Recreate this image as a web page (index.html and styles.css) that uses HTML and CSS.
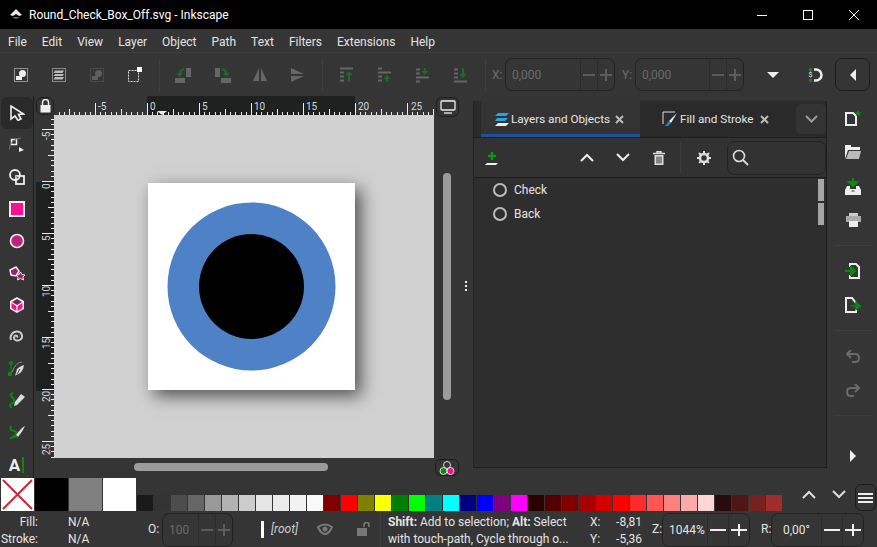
FILE: index.html
```html
<!DOCTYPE html>
<html>
<head>
    <title>Round_Check_Box_Off.svg - Inkscape</title>
    <link rel="stylesheet" href="styles.css">
</head>
<body>
<div class="app">
    <!-- title bar -->
    <div class="titlebar">
        <svg class="logo" width="14" height="12" viewBox="0 0 14 12"><path d="M7 0 L13 6 L10 7 L7 5 L4 7 L1 6 Z" fill="#e8e8e8"/><path d="M3 8 L11 8 L7 10 Z" fill="#5a6a80"/></svg>
        <span class="title-text">Round_Check_Box_Off.svg - Inkscape</span>
        <div class="winctl">
            <span class="winbtn"><svg width="12" height="12" viewBox="0 0 12 12"><path d="M1 6.5H11" stroke="#fff"/></svg></span>
            <span class="winbtn"><svg width="12" height="12" viewBox="0 0 12 12"><rect x="1.5" y="1.5" width="9" height="9" fill="none" stroke="#fff"/></svg></span>
            <span class="winbtn"><svg width="12" height="12" viewBox="0 0 12 12"><path d="M1 1L11 11M11 1L1 11" stroke="#fff"/></svg></span>
        </div>
    </div>

    <!-- menu -->
    <div class="menubar">
        <span>File</span><span>Edit</span><span>View</span><span>Layer</span><span>Object</span><span>Path</span><span>Text</span><span>Filters</span><span>Extensions</span><span>Help</span>
    </div>

    <!-- top toolbar -->
    <div class="toolbar">
        <div class="tgroup first">
            <span class="tbtn"><svg width="16" height="16" viewBox="0 0 16 16"><rect x="1.5" y="1.5" width="13" height="13" fill="none" stroke="#eee" stroke-dasharray="1 1"/><circle cx="9.5" cy="6.5" r="3.5" fill="#eee"/><rect x="3" y="9" width="6" height="4" fill="#eee"/></svg></span>
            <span class="tbtn"><svg width="16" height="16" viewBox="0 0 16 16"><rect x="1.5" y="1.5" width="13" height="13" fill="none" stroke="#ddd" stroke-dasharray="1 1"/><path d="M4 3.5h9l-1.5 2.5h-9zM4 7h9l-1.5 2h-9zM4 10h9l-1.5 2.5h-9z" fill="#bbb"/></svg></span>
            <span class="tbtn dim"><svg width="16" height="16" viewBox="0 0 16 16"><rect x="1.5" y="1.5" width="13" height="13" fill="none" stroke="#5e5e5e" stroke-dasharray="1 1"/><circle cx="9.5" cy="6.5" r="3.5" fill="#5e5e5e"/><rect x="3" y="9" width="6" height="4" fill="#5e5e5e"/></svg></span>
            <span class="tbtn"><svg width="16" height="16" viewBox="0 0 16 16"><rect x="1.5" y="3.5" width="10" height="11" fill="none" stroke="#ddd" stroke-dasharray="2 1"/><rect x="10" y="0" width="5" height="5" fill="#fff"/></svg></span>
        </div>
        <i class="vsep"></i>
        <div class="tgroup">
            <span class="tbtn"><svg width="20" height="16" viewBox="0 0 20 16"><rect x="12" y="1" width="5" height="9" fill="#666"/><rect x="1" y="11" width="10" height="5" fill="#666"/><path d="M10 2 Q6 3 5.500 7" fill="none" stroke="#1f6b24" stroke-width="2"/><path d="M2.500 6H9L5.500 10Z" fill="#1f6b24"/></svg></span>
            <span class="tbtn"><svg width="20" height="16" viewBox="0 0 20 16"><rect x="3" y="1" width="5" height="9" fill="#666"/><rect x="9" y="11" width="10" height="5" fill="#666"/><path d="M10 2 Q14 3 14.500 7" fill="none" stroke="#1f6b24" stroke-width="2"/><path d="M11 6H17.500L14.500 10Z" fill="#1f6b24"/></svg></span>
            <span class="tbtn"><svg width="16" height="16" viewBox="0 0 16 16"><path d="M7 1V14H1ZM9 1V14H15Z" fill="#666"/></svg></span>
            <span class="tbtn"><svg width="16" height="16" viewBox="0 0 16 16"><path d="M1 1L14 7H1ZM1 15L14 9H1Z" fill="#666"/></svg></span>
        </div>
        <i class="vsep"></i>
        <div class="tgroup">
            <span class="tbtn"><svg width="16" height="16" viewBox="0 0 16 16"><path d="M1 1.5H14M1 5.5H5M1 9.5H5M1 13.5H5" stroke="#666" stroke-width="2"/><path d="M10 15V7" stroke="#1f6b24" stroke-width="2"/><path d="M6.500 8L10 4L13.500 8Z" fill="#1f6b24"/></svg></span>
            <span class="tbtn"><svg width="16" height="16" viewBox="0 0 16 16"><path d="M1 1.5H5M1 5.5H14M1 9.5H5M1 13.5H5" stroke="#666" stroke-width="2"/><path d="M10 15V11" stroke="#1f6b24" stroke-width="2"/><path d="M6.500 12L10 8L13.500 12Z" fill="#1f6b24"/></svg></span>
            <span class="tbtn"><svg width="16" height="16" viewBox="0 0 16 16"><path d="M1 2.500H5M1 6.500H5M1 10.500H14M1 14.500H5" stroke="#666" stroke-width="2"/><path d="M10 1V5" stroke="#1f6b24" stroke-width="2"/><path d="M6.500 4L10 8L13.500 4Z" fill="#1f6b24"/></svg></span>
            <span class="tbtn"><svg width="16" height="16" viewBox="0 0 16 16"><path d="M1 2.500H5M1 6.500H5M1 10.500H5M1 14.500H14" stroke="#666" stroke-width="2"/><path d="M10 1V8" stroke="#1f6b24" stroke-width="2"/><path d="M6.500 7L10 11L13.500 7Z" fill="#1f6b24"/></svg></span>
        </div>
        <i class="vsep"></i>
        <span class="coord-label">X:</span>
        <div class="spin spin-x">
            <span class="spin-val off">0,000</span>
            <span class="spin-btn minus off"></span><span class="spin-btn plus off"></span>
        </div>
        <span class="coord-label y">Y:</span>
        <div class="spin spin-y">
            <span class="spin-val off">0,000</span>
            <span class="spin-btn minus off"></span><span class="spin-btn plus off"></span>
        </div>
        <svg class="drop" width="12" height="6" viewBox="0 0 12 6"><path d="M0 0H12L6 6Z" fill="#eee"/></svg>
        <svg class="snap" width="16" height="16" viewBox="0 0 16 16"><path d="M6 2.500H8A5.500 5.500 0 0 1 8 13.500H6" fill="none" stroke="#eee" stroke-width="2.500"/><rect x="1" y="1" width="3" height="3" fill="#0a8a0a"/><rect x="1" y="12" width="3" height="3" fill="#0a8a0a"/><text x="0.500" y="10" class="snap-s">$</text></svg>
        <span class="sidebtn"><svg width="6" height="12" viewBox="0 0 6 12"><path d="M6 0V12L0 6Z" fill="#eee"/></svg></span>
    </div>

    <!-- main area -->
    <div class="main">
        <div class="tools">
            <span class="tool active"><svg width="16" height="16" viewBox="0 0 16 16"><path d="M2 1V14L6 11L9 15.5L12 14L9.5 9.5L14.5 9Z" fill="#2b2b2b" stroke="#eee" stroke-width="1.6"/></svg></span>
            <span class="tool"><svg width="16" height="16" viewBox="0 0 16 16"><rect x="2.5" y="2.5" width="5" height="5" fill="none" stroke="#eee" stroke-width="1.5"/><path d="M0 13Q1 2 12 1" fill="none" stroke="#777"/><path d="M10 10L15 13L10 15Z" fill="#eee"/></svg></span>
            <span class="tool"><svg width="18" height="18" viewBox="0 0 18 18"><circle cx="7" cy="7" r="5" fill="none" stroke="#eee" stroke-width="1.8"/><rect x="8" y="8" width="8" height="8" fill="none" stroke="#eee" stroke-width="1.8"/><path d="M7 7L10 9L8 10Z" fill="#999"/></svg></span>
            <i class="hsep"></i>
            <span class="tool"><svg width="16" height="16" viewBox="0 0 16 16"><rect x="1" y="1" width="14" height="14" fill="#ff0f8b" stroke="#eee" stroke-width="2"/></svg></span>
            <span class="tool"><svg width="16" height="16" viewBox="0 0 16 16"><circle cx="8" cy="8" r="6.5" fill="#c4217c" stroke="#eee" stroke-width="1.6"/></svg></span>
            <span class="tool"><svg width="18" height="18" viewBox="0 0 18 18"><path d="M2 6L8 3L11 7L8 12L3 11Z" fill="#a02070" stroke="#eee" stroke-width="1.5"/><path d="M12.5 8L14 10.5L17 11L15 13L15.5 16L12.5 14.5L9.5 16L10 13L8 11L11 10.5Z" fill="#a02070" stroke="#eee"/></svg></span>
            <span class="tool"><svg width="16" height="18" viewBox="0 0 16 18"><path d="M8 1L15 5V13L8 17L1 13V5Z" fill="#eee"/><path d="M8 3L13 6L8 9L3 6Z" fill="#6b2a52"/><path d="M2.5 7L7.3 10V15L2.5 12Z" fill="#ff0f8b"/><path d="M13.5 7L8.7 10V15L13.5 12Z" fill="#ff0f8b"/></svg></span>
            <span class="tool"><svg width="16" height="16" viewBox="0 0 16 16"><path d="M8 8.500C9.500 6.500 5.500 5.500 5 8.500C4.500 11.500 9 12.500 11.500 10.500C14.500 8 13 2.500 8 2.500C3.500 2.500 0.500 6.500 2 11" fill="none" stroke="#ccc" stroke-width="2"/></svg></span>
            <i class="hsep"></i>
            <span class="tool"><svg width="18" height="18" viewBox="0 0 18 18"><path d="M14 2Q8 2 4 12" fill="none" stroke="#888"/><rect x="0" y="12" width="4" height="4" fill="#0a8a0a"/><circle cx="3" cy="3" r="2" fill="#0a8a0a"/><path d="M3 3V12" stroke="#0a8a0a"/><path d="M16 5Q15 13 8 15L7 16L9 9Q12 6 16 5Z" fill="#ddd"/><path d="M9 14L12 9" stroke="#333"/></svg></span>
            <span class="tool"><svg width="18" height="18" viewBox="0 0 18 18"><path d="M5 1Q1 2 4 5T6 10L2 13L3 16" fill="none" stroke="#0a8a0a" stroke-width="2"/><path d="M13 2L17 5L9 13L6 14L7 10Z" fill="#ddd"/></svg></span>
            <span class="tool"><svg width="18" height="18" viewBox="0 0 18 18"><path d="M3 2Q1 6 6 7T6 12L2 15" fill="none" stroke="#0a8a0a" stroke-width="2"/><path d="M17 2Q14 3 8 11L10 13Q15 7 17 2Z" fill="#ddd"/><path d="M8 11L4 15L10 13Z" fill="#0a8a0a"/></svg></span>
            <span class="tool text-tool"><b>A</b><i class="caret"></i></span>
        </div>

        <div class="canvas-area">
            <div class="corner"><span class="lock"><svg width="11" height="14" viewBox="0 0 11 14"><path d="M2.500 6V3.500A3 3 0 0 1 8.500 3.500V6" fill="none" stroke="#eee" stroke-width="1.500"/><rect x="0.500" y="6" width="10" height="7.500" fill="#eee"/></svg></span></div>
            <svg class="ruler-h" width="380" height="19" viewBox="54 0 380 19">
                <defs>
                    <pattern id="tickH" patternUnits="userSpaceOnUse" x="147" y="0" width="52" height="19">
                        <path d="M0.500 7V19M26.500 13V19M5.700 16V19M10.900 16V19M16.100 16V19M21.300 16V19M31.700 16V19M36.900 16V19M42.100 16V19M47.300 16V19" stroke="#eee" shape-rendering="crispEdges"/>
                    </pattern>
                </defs>
                <rect x="147" y="0" width="208" height="19" fill="#1f2020"/>
                <rect x="54" y="0" width="380" height="19" fill="url(#tickH)"/>
                <g class="rtext">
                    <text x="98" y="14">-5</text><text x="150" y="14">0</text><text x="202" y="14">5</text><text x="254" y="14">10</text><text x="306" y="14">15</text><text x="358" y="14">20</text><text x="411" y="14">25</text>
                </g>
                <path d="M157 15H167L162 19Z" fill="#eee"/>
            </svg>
            <div class="disp-cell"><span class="round-btn"><svg width="16" height="14" viewBox="0 0 16 14"><rect x="1" y="1" width="14" height="9" rx="1" fill="none" stroke="#eee" stroke-width="1.300"/><path d="M4 13H12" stroke="#eee" stroke-width="1.300"/></svg></span></div>
            <svg class="ruler-v" width="18" height="343" viewBox="36 115 18 343">
                <defs>
                    <pattern id="tickV" patternUnits="userSpaceOnUse" x="36" y="181" width="18" height="52">
                        <path d="M6 0.500H18M12 26.500H18M15 5.700H18M15 10.900H18M15 16.100H18M15 21.300H18M15 31.700H18M15 36.900H18M15 42.100H18M15 47.300H18" stroke="#eee" shape-rendering="crispEdges"/>
                    </pattern>
                </defs>
                <rect x="36" y="182" width="18" height="209" fill="#1f2020"/>
                <rect x="36" y="115" width="18" height="343" fill="url(#tickV)"/>
                <g class="rtext">
                    <text transform="translate(50 140) rotate(-90)">-5</text>
                    <text transform="translate(50 189) rotate(-90)">0</text>
                    <text transform="translate(50 241) rotate(-90)">5</text>
                    <text transform="translate(50 297) rotate(-90)">10</text>
                    <text transform="translate(50 349) rotate(-90)">15</text>
                    <text transform="translate(50 402) rotate(-90)">20</text>
                    <text transform="translate(50 455) rotate(-90)">25</text>
                </g>
            </svg>
            <div class="canvas">
                <div class="page">
                    <svg width="207" height="207" viewBox="0 0 207 207"><circle cx="103.500" cy="103.500" r="84" fill="#4f81c7"/><circle cx="103.500" cy="103.500" r="52.500" fill="#000"/></svg>
                </div>
            </div>
            <div class="vscroll"><i></i></div>
            <div class="hscroll"><i></i></div>
            <div class="cms-cell"><span class="round-btn cms"><svg width="18" height="16" viewBox="0 0 18 16"><circle cx="9" cy="5" r="3.500" fill="#333" stroke="#ddd"/><circle cx="5.500" cy="11" r="3.500" fill="#0a8a0a" stroke="#ddd"/><circle cx="12.500" cy="11" r="3.500" fill="#ff0f8b" stroke="#ddd"/></svg></span></div>
        </div>

        <div class="handle"><i></i><i></i><i></i></div>

        <div class="dock">
            <div class="tabs">
                <div class="tab active">
                    <svg width="14" height="13" viewBox="0 0 14 13"><path d="M3 0H14L11 3H0Z" fill="#2ba3e8"/><path d="M2 5H13L10 8H0Z" fill="#2ba3e8"/><path d="M3 10H14L11 13H0Z" fill="#eee"/></svg>
                    <span>Layers and Objects</span>
                    <svg class="x" width="9" height="9" viewBox="0 0 9 9"><path d="M1 1L8 8M8 1L1 8" stroke="#bbb" stroke-width="2"/></svg>
                </div>
                <div class="tab second">
                    <svg width="16" height="16" viewBox="0 0 16 16"><path d="M1 13V1H13" fill="none" stroke="#ddd"/><path d="M15 2L7 10L9 12Z" fill="#eee"/><path d="M7 10L3 15H6L9 12Z" fill="#1e88d8"/></svg>
                    <span>Fill and Stroke</span>
                    <svg class="x" width="9" height="9" viewBox="0 0 9 9"><path d="M1 1L8 8M8 1L1 8" stroke="#bbb" stroke-width="2"/></svg>
                </div>
                <span class="tabmenu"><svg width="13" height="8" viewBox="0 0 13 8"><path d="M1 1L6.500 6.500L12 1" fill="none" stroke="#999" stroke-width="2"/></svg></span>
            </div>
            <div class="dock-tools">
                <span class="add-layer"><svg width="16" height="14" viewBox="0 0 16 14"><path d="M3 12H14L12 14H1Z" fill="#eee"/><path d="M8 1V9M4 5H12" stroke="#0a9a0a" stroke-width="2.400"/></svg></span>
                <svg class="chev up" width="14" height="9" viewBox="0 0 14 9"><path d="M1 8L7 2L13 8" fill="none" stroke="#eee" stroke-width="2"/></svg>
                <svg class="chev" width="14" height="9" viewBox="0 0 14 9"><path d="M1 1L7 7L13 1" fill="none" stroke="#eee" stroke-width="2"/></svg>
                <svg class="trash" width="12" height="14" viewBox="0 0 12 14"><path d="M0 2.500H12M4 2V0.700H8V2" fill="none" stroke="#ddd" stroke-width="1.400"/><path d="M1.500 4H10.500V14H1.500Z" fill="#ddd"/><path d="M4 5.500V12.500M6 5.500V12.500M8 5.500V12.500" stroke="#2f2f2f"/></svg>
                <i class="vsep dock-sep"></i>
                <svg class="gear" width="14" height="14" viewBox="0 0 14 14"><circle cx="7" cy="7" r="4" fill="none" stroke="#ddd" stroke-width="2.600"/><path d="M7 0V14M0 7H14M2 2L12 12M12 2L2 12" stroke="#ddd" stroke-width="2" stroke-dasharray="2.500 9 2.500"/></svg>
                <div class="search"><svg width="17" height="17" viewBox="0 0 17 17"><circle cx="7" cy="7" r="5.500" fill="none" stroke="#ddd" stroke-width="1.600"/><path d="M11 11L16 16" stroke="#ddd" stroke-width="1.800"/></svg></div>
            </div>
            <div class="layers">
                <div class="layer"><i class="radio"></i><span>Check</span></div>
                <div class="layer"><i class="radio"></i><span>Back</span></div>
                <i class="lbar one"></i>
                <i class="lbar two"></i>
            </div>
        </div>

        <div class="cmds">
            <span class="cmd"><svg width="16" height="16" viewBox="0 0 16 16"><path d="M1 3H8L11 6V15H1Z" fill="none" stroke="#eee" stroke-width="2"/><path d="M13 0L14 2L16 2.500L14.500 4L15 6L13 5L11 6L11.500 4L10 2.500L12 2Z" fill="#0a8a0a"/></svg></span>
            <span class="cmd"><svg width="16" height="14" viewBox="0 0 16 14"><path d="M0 0H6V2H15V5H3L0 14Z" fill="#eee"/><path d="M4 6H16L14 14H1Z" fill="#bbb"/></svg></span>
            <span class="cmd"><svg width="16" height="17" viewBox="0 0 16 17"><path d="M2 8H5V11H11V8H14L16 12V17H0V12Z" fill="#eee"/><path d="M6.500 13H9.500" stroke="#333"/><path d="M8 0V6M4 4L8 8L12 4Z" fill="#0a8a0a" stroke="#0a8a0a" stroke-width="2"/></svg></span>
            <span class="cmd"><svg width="15" height="14" viewBox="0 0 15 14"><rect x="3" y="0" width="9" height="3" fill="#ccc"/><rect x="0" y="3" width="15" height="6" fill="#aaa"/><rect x="3" y="8" width="9" height="6" fill="#eee"/></svg></span>
            <i class="hsep"></i>
            <span class="cmd"><svg width="16" height="16" viewBox="0 0 16 16"><path d="M5 4V1H11L14 4V15H5V12" fill="none" stroke="#eee" stroke-width="2"/><path d="M0 8H7M6 4.500L10 8L6 11.500Z" fill="#0a8a0a" stroke="#0a8a0a" stroke-width="2"/></svg></span>
            <span class="cmd"><svg width="16" height="16" viewBox="0 0 16 16"><path d="M11 6L7 1H1V15H11V12" fill="none" stroke="#eee" stroke-width="2"/><path d="M6 9H12M11 5.500L15.500 9L11 12.500Z" fill="#0a8a0a" stroke="#0a8a0a" stroke-width="1.500"/></svg></span>
            <i class="hsep"></i>
            <span class="cmd"><svg width="14" height="13" viewBox="0 0 14 13"><path d="M1 4H9Q13 4 13 8T9 12H6M5 0L1 4L5 8" fill="none" stroke="#6a6a6a" stroke-width="2"/></svg></span>
            <span class="cmd"><svg width="14" height="13" viewBox="0 0 14 13"><path d="M13 4H5Q1 4 1 8T5 12H8M9 0L13 4L9 8" fill="none" stroke="#6a6a6a" stroke-width="2"/></svg></span>
            <i class="hsep"></i>
            <span class="cmd last"><svg width="6" height="12" viewBox="0 0 6 12"><path d="M0 0V12L6 6Z" fill="#eee"/></svg></span>
        </div>
    </div>

    <!-- palette -->
    <div class="palette">
        <span class="big none"><svg width="33" height="33" viewBox="0 0 33 33"><path d="M2 2L31 31M31 2L2 31" stroke="#c8283c" stroke-width="2"/></svg></span>
        <span class="big black"></span>
        <span class="big grey"></span>
        <span class="big white"></span>
        <div class="swatches">
            <i class="s1a"></i><i class="s30"></i><i class="s4d"></i><i class="s66"></i><i class="s99"></i><i class="sb3"></i><i class="scc"></i><i class="se6"></i><i class="sec"></i><i class="sf2"></i><i class="sf9"></i>
            <i class="maroon"></i><i class="red"></i><i class="olive"></i><i class="yellow"></i><i class="green"></i><i class="lime"></i><i class="teal"></i><i class="cyan"></i><i class="navy"></i><i class="blue"></i><i class="purple"></i><i class="magenta"></i>
            <i class="r2b"></i><i class="r55"></i><i class="r80"></i><i class="raa"></i><i class="rd4"></i><i class="rff"></i><i class="t2a"></i><i class="t55"></i><i class="t80"></i><i class="taa"></i><i class="td5"></i>
            <i class="m28"></i><i class="m50"></i><i class="m78"></i><i class="ma0"></i>
        </div>
        <div class="pal-nav">
            <svg width="14" height="9" viewBox="0 0 14 9"><path d="M1 8L7 2L13 8" fill="none" stroke="#ddd" stroke-width="2"/></svg>
            <svg width="14" height="9" viewBox="0 0 14 9"><path d="M1 1L7 7L13 1" fill="none" stroke="#ddd" stroke-width="2"/></svg>
            <span class="pal-menu"><i></i><i></i><i></i></span>
        </div>
    </div>

    <!-- status bar -->
    <div class="status">
        <div class="fillstroke">
            <span class="fs-label">Fill:</span><span>N/A</span>
            <span class="fs-label">Stroke:</span><span>N/A</span>
        </div>
        <span class="opa-label">O:</span>
        <div class="spin spin-o">
            <span class="spin-val off">100</span>
            <span class="spin-btn minus off"></span><span class="spin-btn plus off"></span>
        </div>
        <i class="layer-bar"></i>
        <span class="root">[root]</span>
        <svg class="eye" width="16" height="12" viewBox="0 0 16 12"><path d="M1 4Q8 -1 15 4Q12 11 8 11Q4 11 1 4Z" fill="none" stroke="#777" stroke-width="2"/><circle cx="8" cy="6" r="2.500" fill="#777"/></svg>
        <svg class="slock" width="14" height="14" viewBox="0 0 14 14"><path d="M7 5V3A2.500 2.500 0 0 1 12 3V5" fill="none" stroke="#777" stroke-width="1.600"/><rect x="0" y="6" width="10" height="8" fill="#777"/></svg>
        <i class="vsep status-sep"></i>
        <div class="hint"><b>Shift:</b> Add to selection; <b>Alt:</b> Select<br>with touch-path, Cycle through o...</div>
        <div class="xy">
            <span>X:</span><span class="num">-8,81</span>
            <span>Y:</span><span class="num">-5,36</span>
        </div>
        <span class="z-label">Z:</span>
        <div class="spin spin-z">
            <span class="spin-val">1044%</span>
            <span class="spin-btn minus"></span><span class="spin-btn plus"></span>
        </div>
        <span class="r-label">R:</span>
        <div class="spin spin-r">
            <span class="spin-val center">0,00&deg;</span>
            <span class="spin-btn minus"></span><span class="spin-btn plus"></span>
        </div>
    </div>
</div>
</body>
</html>
```

FILE: styles.css
```css
* {
    box-sizing: border-box;
}

body {
    margin: 0;
    background-color: #353535;
    color: #e4e4e4;
    font-family: "Roboto", "Liberation Sans", sans-serif;
    font-size: 12px;
    overflow: hidden;
}

svg {
    display: block;
    flex: none;
}

i {
    display: block;
}

.app {
    width: 877px;
    height: 547px;
    display: flex;
    flex-direction: column;
    overflow: hidden;
}

/* title bar */
.titlebar {
    height: 29px;
    background-color: #000;
    color: #fff;
    display: flex;
    align-items: center;
    padding-left: 9px;
}

.title-text {
    margin-left: 6px;
}

.winctl {
    margin-left: auto;
    display: flex;
}

.winbtn {
    width: 46px;
    height: 29px;
    display: flex;
    align-items: center;
    justify-content: center;
}

/* menu */
.menubar {
    height: 24px;
    display: flex;
    align-items: center;
    gap: 15px;
    padding: 2px 0 0 8px;
    border-bottom: 1px solid #3c3c3c;
}

/* top toolbar */
.toolbar {
    height: 43px;
    display: flex;
    align-items: center;
}

.tgroup {
    display: flex;
}

.tgroup.first {
    margin-left: 2px;
}

.tbtn {
    width: 38px;
    height: 32px;
    display: flex;
    align-items: center;
    justify-content: center;
}

.vsep {
    width: 1px;
    height: 32px;
    background-color: #3d3d3d;
    margin: 0 5px;
}

.coord-label {
    color: #6e6e6e;
    margin-left: 1px;
    width: 13px;
}

.coord-label.y {
    margin-left: 7px;
}

.spin {
    display: flex;
    align-items: stretch;
    border: 1px solid #222;
    border-radius: 7px;
}

.spin-x {
    width: 110px;
    height: 33px;
}

.spin-y {
    width: 109px;
    height: 33px;
}

.spin-val {
    flex: 1;
    display: flex;
    align-items: center;
    padding-left: 6px;
}

.spin-val.center {
    justify-content: center;
    padding-left: 0;
}

.spin-btn {
    width: 17px;
    position: relative;
    border-left: 1px solid #2b2b2b;
    color: #eee;
}

.spin-btn.off {
    color: #5c5c5c;
}

/* minus and plus drawn as bars */
.minus::before,
.plus::before,
.plus::after {
    content: "";
    position: absolute;
    background-color: currentColor;
}

.minus::before,
.plus::before {
    left: 2px;
    right: 2px;
    top: 50%;
    height: 2px;
    margin-top: -1px;
}

.plus::after {
    top: 50%;
    left: 50%;
    width: 2px;
    height: 12px;
    margin: -6px 0 0 -1px;
}

.off {
    color: #6a6a6a;
}

.drop {
    margin-left: 23px;
}

.snap {
    margin-left: 29px;
}

.snap-s {
    font-size: 7px;
    fill: #eee;
}

.sidebtn {
    width: 35px;
    height: 33px;
    margin-left: 11px;
    border: 1px solid #1d1d1d;
    border-radius: 7px;
    display: flex;
    align-items: center;
    justify-content: center;
}

/* main area */
.main {
    height: 382px;
    display: flex;
}

.tools {
    width: 33px;
    height: 382px;
    display: flex;
    flex-direction: column;
    align-items: center;
    padding-top: 1px;
}

.tool {
    width: 32px;
    height: 32px;
    flex: none;
    display: flex;
    align-items: center;
    justify-content: center;
}

.tool.active {
    background-color: #2a2a2a;
    border-radius: 6px;
}

.tools .hsep {
    margin: 0;
    height: 1px;
}

.hsep {
    width: 100%;
    height: 1px;
    background-color: #3d3d3d;
}

.text-tool {
    gap: 2px;
    font-size: 17px;
    color: #eee;
}

.caret {
    width: 2px;
    height: 16px;
    background-color: #0a8a0a;
}

/* canvas and rulers */
.canvas-area {
    width: 426px;
    display: grid;
    grid-template-columns: 20px 380px 25px;
    grid-template-rows: 19px 343px 20px;
    border-left: 1px solid #1e1e1e;
}

.corner {
    padding: 1px 0 0 2px;
}

.lock,
.round-btn {
    display: flex;
    align-items: center;
    justify-content: center;
    border: 1px solid #1d1d1d;
    border-radius: 6px;
}

.lock {
    width: 18px;
    height: 18px;
}

.ruler-v {
    margin-left: 2px;
}

.rtext {
    font-size: 10px;
    fill: #cfd8e0;
}

.disp-cell {
    display: flex;
    justify-content: flex-end;
    padding-top: 1px;
}

.round-btn {
    width: 23px;
    height: 20px;
}

.canvas {
    background-color: #d1d1d1;
    padding: 68px 0 0 94px;
    overflow: hidden;
}

.page {
    width: 207px;
    height: 207px;
    background-color: #fff;
    box-shadow: 6px 6px 16px rgba(0, 0, 0, 0.6);
}

.vscroll {
    padding: 58px 0 0 9px;
}

.vscroll i {
    width: 8px;
    height: 227px;
    border-radius: 4px;
    background-color: #9b9b9b;
}

.hscroll {
    grid-column: 2;
    padding: 5px 0 0 80px;
}

.hscroll i {
    width: 194px;
    height: 8px;
    border-radius: 4px;
    background-color: #9b9b9b;
}

.cms {
    height: 17px;
    width: 24px;
    margin-left: 1px;
    margin-top: 1px;
}

/* dock handle */
.handle {
    width: 14px;
    display: flex;
    flex-direction: column;
    align-items: center;
    justify-content: center;
    gap: 2px;
    padding-bottom: 2px;
}

.handle i {
    width: 2px;
    height: 2px;
    background-color: #eee;
}

/* dock panel */
.dock {
    width: 354px;
    height: 367px;
    margin-top: 5px;
    background-color: #2e2e2e;
    border: 1px solid #1e1e1e;
    border-top: none;
    border-left-color: #222;
    display: flex;
    flex-direction: column;
}

.tabs {
    height: 37px;
    flex: none;
    display: flex;
    padding-left: 7px;
    border-bottom: 1px solid #1e1e1e;
    background-color: #2a2a2a;
    font-size: 11.700px;
}

.tab {
    height: 36px;
    display: flex;
    align-items: center;
}

.tab.active {
    width: 159px;
    padding: 3px 0 0 14px;
    gap: 2px;
    background-color: #333;
    border-bottom: 3px solid #1c5398;
}

.tab.second {
    width: 156px;
    padding-left: 22px;
    gap: 2px;
}

.x {
    margin-left: 3px;
}

.tab.second .x {
    margin-left: 5px;
}

.tabmenu {
    width: 30px;
    height: 30px;
    margin-top: 3px;
    border-radius: 5px;
    background-color: #333;
    display: flex;
    align-items: center;
    justify-content: center;
}

.dock-tools {
    height: 40px;
    flex: none;
    display: flex;
    align-items: center;
    border-bottom: 1px solid #1e1e1e;
    background-color: #323232;
}

.add-layer {
    margin-left: 10px;
}

.chev.up {
    margin-left: 80px;
}

.chev {
    margin-left: 22px;
}

.trash {
    margin-left: 23px;
}

.dock-sep {
    margin: 0 0 0 15px;
}

.gear {
    margin-left: 16px;
}

.search {
    width: 99px;
    height: 34px;
    margin-left: 16px;
    border: 1px solid #222;
    border-radius: 7px;
    display: flex;
    align-items: center;
    padding-left: 4px;
}

.layers {
    flex: 1;
    position: relative;
    padding: 0 0 0 19px;
}

.layer {
    height: 24px;
    display: flex;
    align-items: center;
    gap: 7px;
}

.radio {
    width: 14px;
    height: 14px;
    border: 2px solid #bbb;
    border-radius: 50%;
}

.lbar {
    position: absolute;
    left: 344px;
    width: 6px;
    height: 22px;
    background-color: #a6a6a6;
}

.lbar.one {
    top: 1px;
}

.lbar.two {
    top: 25px;
}

/* right command bar */
.cmds {
    width: 50px;
    display: flex;
    flex-direction: column;
    align-items: center;
    padding: 5px 5px 0 7px;
}

.cmd {
    width: 32px;
    height: 34px;
    flex: none;
    display: flex;
    align-items: center;
    justify-content: center;
}

.cmds .hsep {
    margin: 8px 0;
}

.cmd.last {
    margin-top: 15px;
}

/* palette */
.palette {
    height: 33px;
    display: flex;
    padding-left: 1px;
    gap: 1px;
}

.big {
    width: 33px;
    height: 33px;
}

.none,
.white {
    background-color: #fff;
}

.black {
    background-color: #000;
}

.grey {
    background-color: #808080;
}

.swatches {
    margin-top: 17px;
    display: flex;
    gap: 1px;
}

.swatches i {
    width: 16px;
    height: 16px;
}

.s1a { background-color: #1a1a1a; }
.s30 { background-color: #333; }
.s4d { background-color: #4d4d4d; }
.s66 { background-color: #666; }
.s99 { background-color: #999; }
.sb3 { background-color: #b3b3b3; }
.scc { background-color: #ccc; }
.se6 { background-color: #e6e6e6; }
.sec { background-color: #ececec; }
.sf2 { background-color: #f2f2f2; }
.sf9 { background-color: #f9f9f9; }
.maroon { background-color: #800000; }
.red { background-color: #f00; }
.olive { background-color: #808000; }
.yellow { background-color: #ff0; }
.green { background-color: #008000; }
.lime { background-color: #0f0; }
.teal { background-color: #008080; }
.cyan { background-color: #0ff; }
.navy { background-color: #000080; }
.blue { background-color: #00f; }
.purple { background-color: #800080; }
.magenta { background-color: #f0f; }
.r2b { background-color: #2b0000; }
.r55 { background-color: #500; }
.r80 { background-color: #800000; }
.raa { background-color: #a00; }
.rd4 { background-color: #d40000; }
.rff { background-color: #f00; }
.t2a { background-color: #ff2a2a; }
.t55 { background-color: #f55; }
.t80 { background-color: #ff8080; }
.taa { background-color: #faa; }
.td5 { background-color: #ffd5d5; }
.m28 { background-color: #280b0b; }
.m50 { background-color: #501616; }
.m78 { background-color: #782121; }
.ma0 { background-color: #a02c2c; }

.pal-nav {
    margin-left: auto;
    display: flex;
    gap: 16px;
    padding-top: 12px;
    padding-right: 1px;
}

.pal-menu {
    width: 21px;
    height: 27px;
    margin: -6px 0 0 -7px;
    border: 1px solid #1d1d1d;
    border-radius: 6px;
    display: flex;
    flex-direction: column;
    justify-content: center;
    align-items: center;
    gap: 2px;
}

.pal-menu i {
    width: 15px;
    height: 2px;
    background-color: #eee;
}

/* status bar */
.status {
    height: 36px;
    display: flex;
    align-items: center;
}

.fillstroke,
.hint,
.xy {
    margin-top: 4px;
}

.fillstroke {
    width: 98px;
    display: grid;
    grid-template-columns: 38px 1fr;
    column-gap: 30px;
    line-height: 17px;
}

.fs-label {
    text-align: right;
}

.opa-label {
    margin-left: 50px;
    width: 14px;
}

.spin-o,
.spin-z,
.spin-r {
    height: 34px;
    margin-top: 2px;
}

.spin-o {
    width: 71px;
}

.spin-z {
    width: 88px;
}

.spin-r {
    width: 93px;
}

.spin-z .spin-btn,
.spin-r .spin-btn {
    width: 21px;
}

.layer-bar {
    width: 3px;
    height: 17px;
    background-color: #fff;
    margin-left: 28px;
}

.root {
    margin-left: 7px;
    font-style: italic;
    width: 46px;
    color: #ccc;
}

.slock {
    margin-left: 24px;
}

.status-sep {
    margin: 0 0 0 9px;
    height: 36px;
}

.hint {
    width: 202px;
    margin-left: 7px;
    line-height: 17px;
    white-space: nowrap;
}

.xy {
    width: 52px;
    display: grid;
    grid-template-columns: 12px 1fr;
    line-height: 17px;
}

.num {
    text-align: right;
}

.z-label {
    margin-left: 10px;
    width: 10px;
}

.r-label {
    margin-left: 11px;
    width: 10px;
}
```
